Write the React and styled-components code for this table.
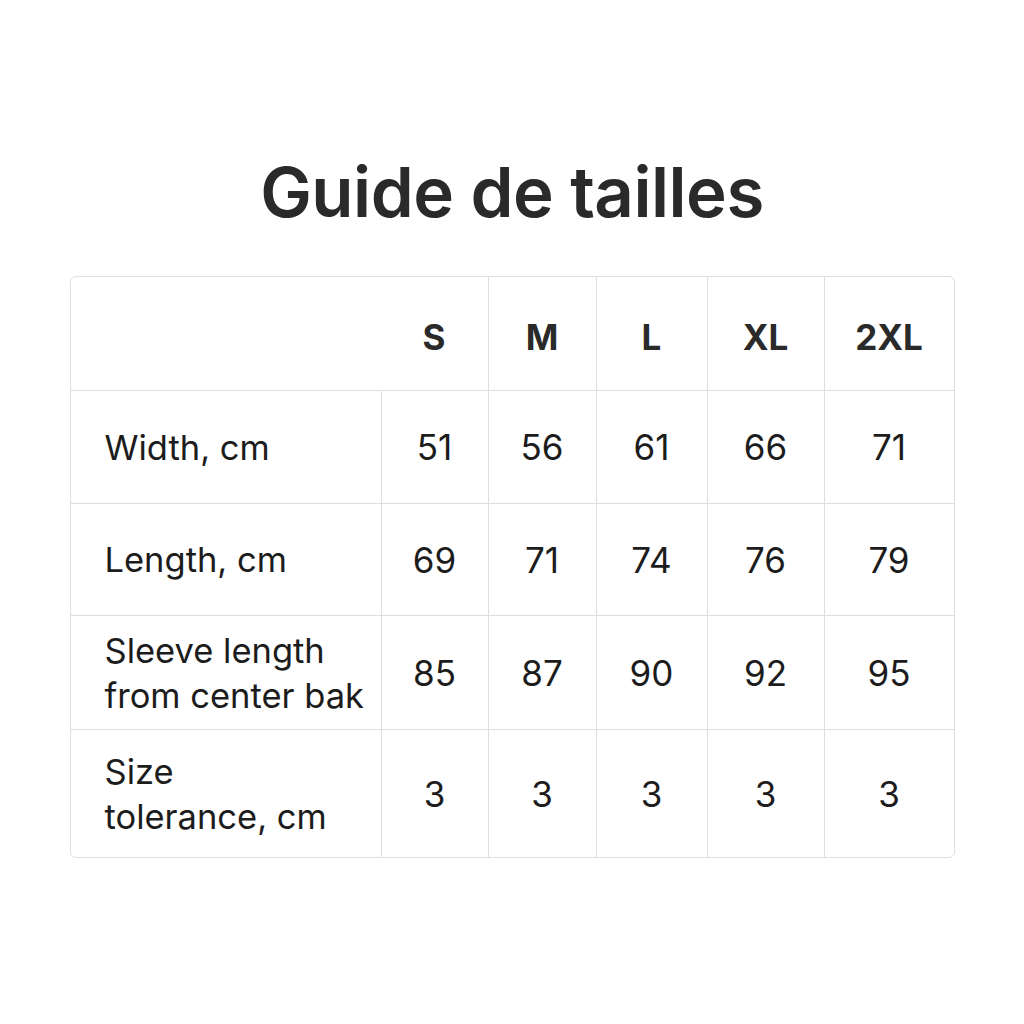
import React from 'react';
import styled, { createGlobalStyle } from 'styled-components';

const GlobalStyle = createGlobalStyle`
  html, body {
    margin: 0;
    padding: 0;
    background: #ffffff;
  }
  body {
    font-family: Inter, "Noto Sans", "Liberation Sans", sans-serif;
    color: #1c1c1c;
  }
`;

const Page = styled.div`
  width: 1024px;
  height: 1024px;
  display: flex;
  flex-direction: column;
  align-items: center;
  padding-top: 150px;
  box-sizing: border-box;
`;

const Title = styled.h1`
  margin: 0;
  font-size: 69px;
  font-weight: 600;
  letter-spacing: -0.5px;
  color: #2a2a2a;
  line-height: 84px;
`;

const Table = styled.table`
  margin-top: 42px;
  width: 883px;
  table-layout: fixed;
  border-collapse: separate;
  border-spacing: 0;
  border: 1.5px solid #dedede;
  border-radius: 6px;
`;

const Cell = styled.td`
  height: ${props => props.h}px;
  padding: 0;
  text-align: center;
  vertical-align: middle;
  font-size: 35px;
  font-weight: 400;
  color: #1c1c1c;
  border-left: ${props => (props.first || props.open ? 'none' : '1.5px solid #dedede')};
  border-top: ${props => (props.top ? 'none' : '1.5px solid #dedede')};
`;

const HeadCell = styled(Cell)`
  font-weight: 700;
  font-size: 35px;
  color: #2a2a2a;
  padding-top: 6px;
`;

const LabelCell = styled(Cell)`
  text-align: left;
  padding-left: 34px;
  font-size: 34.5px;
  line-height: 45px;
`;

const widths = [310, 107, 108, 111, 117, 130];
const sizes = ['S', 'M', 'L', 'XL', '2XL'];

const rows = [
  { label: ['Width, cm'], values: [51, 56, 61, 66, 71], h: 112 },
  { label: ['Length, cm'], values: [69, 71, 74, 76, 79], h: 111 },
  { label: ['Sleeve length', 'from center bak'], values: [85, 87, 90, 92, 95], h: 113 },
  { label: ['Size', 'tolerance, cm'], values: [3, 3, 3, 3, 3], h: 127 },
];

const App = () => {
  return (
    <Page>
      <GlobalStyle />
      <Title>Guide de tailles</Title>
      <Table>
        <colgroup>
          {widths.map((w, i) => (
            <col key={i} style={{ width: w }} />
          ))}
        </colgroup>
        <tbody>
          <tr>
            <HeadCell first top h={107} />
            {sizes.map((s, i) => (
              <HeadCell key={s} top open={i === 0} h={107}>
                {s}
              </HeadCell>
            ))}
          </tr>
          {rows.map((r, i) => (
            <tr key={i}>
              <LabelCell first h={r.h}>
                {r.label.map((l, j) => (
                  <div key={j}>{l}</div>
                ))}
              </LabelCell>
              {r.values.map((v, j) => (
                <Cell key={j} h={r.h}>
                  {v}
                </Cell>
              ))}
            </tr>
          ))}
        </tbody>
      </Table>
    </Page>
  );
};

export default App;
